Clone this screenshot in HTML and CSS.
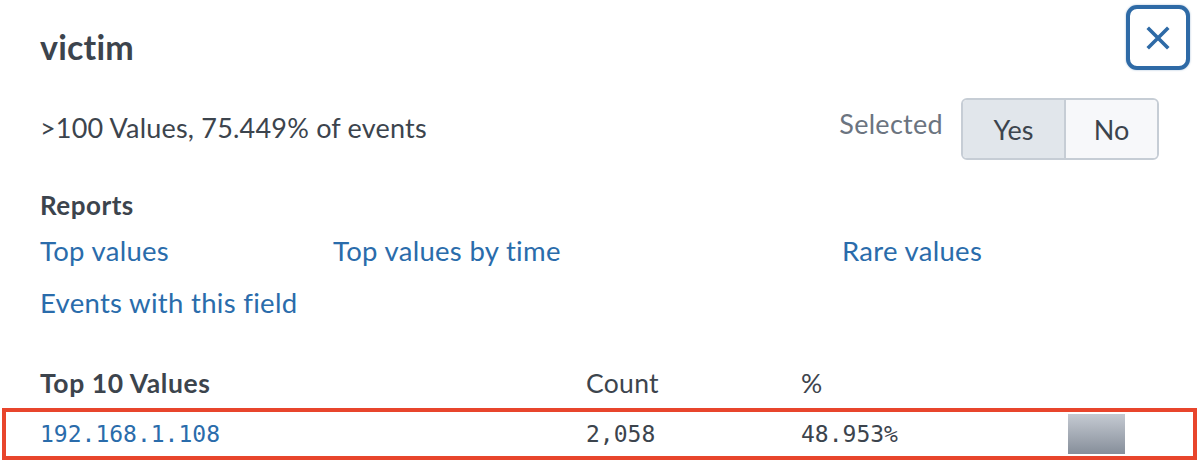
FILE: index.html
```html
<!DOCTYPE html>
<html>
<head>
<meta charset="utf-8">
<link rel="stylesheet" href="styles.css">
</head>
<body>
<div class="panel">
  <div class="header">
    <h1 class="title">victim</h1>
    <button class="close" aria-label="Close">
      <svg width="24" height="24" viewBox="0 0 24 24"><path d="M3 3 L21 21 M21 3 L3 21" stroke="#2e6aa6" stroke-width="3.6" stroke-linecap="square" fill="none"/></svg>
    </button>
  </div>
  <div class="summary">
    <div class="summary-text">&gt;100 Values, 75.449% of events</div>
    <div class="selected">
      <span class="selected-label">Selected</span>
      <div class="toggle">
        <span class="seg seg-on">Yes</span>
        <span class="seg seg-off">No</span>
      </div>
    </div>
  </div>
  <div class="reports">
    <div class="section-title">Reports</div>
    <div class="links">
      <a class="link">Top values</a>
      <a class="link">Top values by time</a>
      <a class="link">Rare values</a>
      <a class="link">Events with this field</a>
    </div>
  </div>
  <div class="table">
    <div class="thead">
      <div class="c-val">Top 10 Values</div>
      <div class="c-count">Count</div>
      <div class="c-pct">%</div>
      <div class="c-bar"></div>
    </div>
    <div class="trow">
      <div class="c-val mono link-mono">192.168.1.108</div>
      <div class="c-count mono">2,058</div>
      <div class="c-pct mono">48.953%</div>
      <div class="c-bar"><div class="bar" style="width:57px"></div></div>
    </div>
  </div>
</div>
</body>
</html>
```
FILE: styles.css
```css
html, body { margin: 0; padding: 0; background: #fff; }
body { font-family: Lato, "Open Sans", sans-serif; color: #3c444d; width: 1199px; height: 464px; overflow: hidden; }
.panel { position: relative; }
.header { display: flex; justify-content: space-between; align-items: flex-start; padding: 5px 9px 0 40px; height: 70px; box-sizing: border-box; }
.title { margin: 22px 0 0 0; font-size: 34px; line-height: 40px; font-weight: 700; letter-spacing: 0.2px; }
.close { width: 64px; height: 65px; box-sizing: border-box; border: 4px solid #2e6aa6; border-radius: 11px; background: #fff; display: flex; align-items: center; justify-content: center; padding: 0; box-shadow: 0 0 2px rgba(46,106,166,0.5); }
.summary { display: flex; justify-content: space-between; align-items: center; padding: 28px 40px 0 40px; }
.summary-text { font-size: 27px; line-height: 30px; letter-spacing: 0.2px; margin-top: -2px; }
.selected { display: flex; align-items: center; gap: 18px; }
.selected-label { font-size: 27px; letter-spacing: 0.3px; color: #6b7480; margin-top: -12px; }
.toggle { display: flex; border: 2px solid #c6cdd5; border-radius: 6px; height: 62px; box-sizing: border-box; overflow: hidden; }
.seg { display: flex; align-items: center; justify-content: center; font-size: 27px; color: #3c444d; }
.seg-on { width: 101px; background: #e1e6eb; border-right: 2px solid #c6cdd5; }
.seg-off { width: 91px; background: #f7f8fa; }
.reports { padding: 30px 40px 0 40px; }
.section-title { font-size: 26px; font-weight: 700; line-height: 30px; letter-spacing: 0.5px; }
.links { display: grid; grid-template-columns: 293px 509px auto; row-gap: 22px; margin-top: 16px; }
.link { font-size: 27.5px; line-height: 30px; letter-spacing: 0.3px; color: #2a6cab; }
.table { margin-top: 50px; }
.thead, .trow { display: grid; grid-template-columns: 546px 215px 267px 1fr; padding-left: 40px; }
.thead { font-size: 26.5px; line-height: 30px; height: 40px; letter-spacing: 0.3px; }
.thead .c-val { font-weight: 700; letter-spacing: 0.6px; }
.trow { margin: 0 2px; border: 4px solid #e8452c; padding-left: 34px; height: 52px; box-sizing: border-box; align-items: center; }
.mono { font-family: "DejaVu Sans Mono", monospace; font-size: 23px; line-height: 30px; letter-spacing: 0; }
.link-mono { color: #2a6cab; }
.c-bar { display: flex; align-items: center; height: 100%; }
.bar { height: 40px; background: linear-gradient(#c5cad2, #868e9a); }
```
